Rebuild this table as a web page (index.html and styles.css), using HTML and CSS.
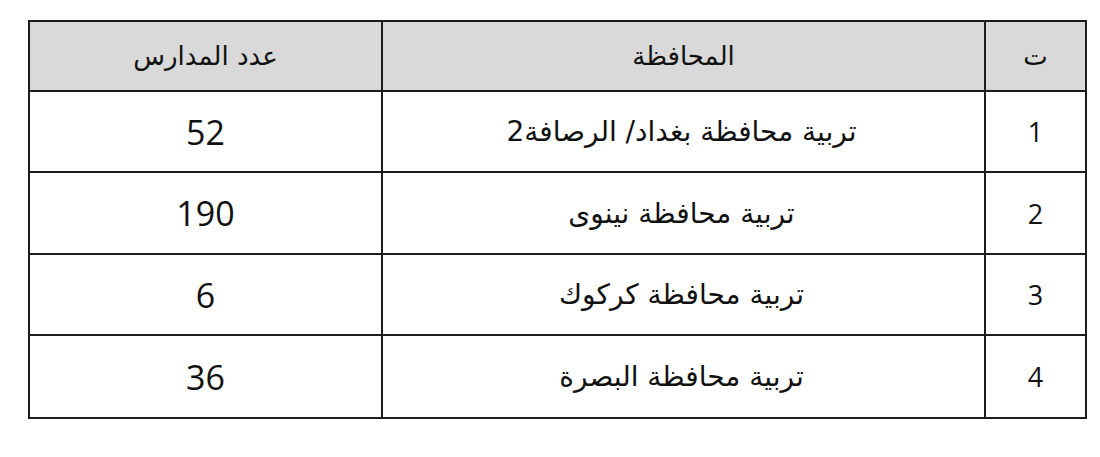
FILE: index.html
```html
<!DOCTYPE html>
<html lang="ar" dir="rtl">
<head>
<meta charset="utf-8">
<link rel="stylesheet" href="styles.css">
</head>
<body>
<div class="wrap">
<table class="grid">
<colgroup><col class="c-num"><col class="c-gov"><col class="c-count"></colgroup>
<thead>
<tr><th>ت</th><th>المحافظة</th><th>عدد المدارس</th></tr>
</thead>
<tbody>
<tr><td class="num">1</td><td class="ar">تربية محافظة بغداد/ الرصافة2</td><td class="num big">52</td></tr>
<tr class="r-tall"><td class="num">2</td><td class="ar">تربية محافظة نينوى</td><td class="num big">190</td></tr>
<tr><td class="num">3</td><td class="ar">تربية محافظة كركوك</td><td class="num big">6</td></tr>
<tr class="r-last"><td class="num">4</td><td class="ar">تربية محافظة البصرة</td><td class="num big">36</td></tr>
</tbody>
</table>
</div>
</body>
</html>
```
FILE: styles.css
```css
html, body { margin: 0; padding: 0; background: #fff; }
.wrap { padding: 20px 14px 0 28px; direction: ltr; }
.grid {
  direction: rtl;
  border-collapse: collapse;
  width: 1057px;
  table-layout: fixed;
  color: #111;
}
.c-num { width: 101px; }
.c-gov { width: 603px; }
.c-count { width: 353px; }
.grid th, .grid td {
  border: 2px solid #1c1c1c;
  text-align: center;
  vertical-align: middle;
  padding: 0;
}
.grid th {
  background: #d9d9d9;
  height: 68px;
  font-family: "DejaVu Sans", "Noto Sans", sans-serif;
  font-weight: normal;
  font-size: 26px;
}
.grid td { height: 79px; }
.grid tr.r-tall td { height: 80px; }
.grid tr.r-last td { height: 81px; }
.grid td.ar {
  font-family: "DejaVu Sans", "Noto Sans", sans-serif;
  font-size: 28px;
  padding-right: 4px;
}
.grid td.num {
  font-family: "Open Sans", "Liberation Sans", sans-serif;
  font-size: 27px;
}
.grid td.big { font-size: 34px; }
```
